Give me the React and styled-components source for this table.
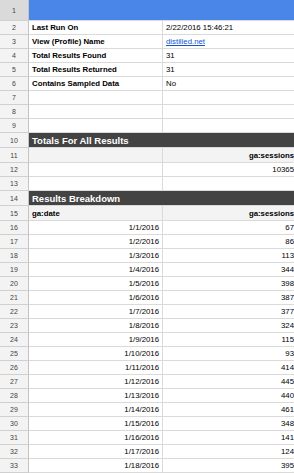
import styled, { createGlobalStyle } from "styled-components";

const GlobalStyle = createGlobalStyle`
  html, body {
    margin: 0;
    padding: 0;
    overflow: hidden;
    background: #ffffff;
  }
  body {
    font-family: "Liberation Sans", Arial, sans-serif;
  }
`;

const info = [
  { label: "Last Run On", value: "2/22/2016 15:46:21" },
  { label: "View (Profile) Name", value: "distilled.net", link: true },
  { label: "Total Results Found", value: "31" },
  { label: "Total Results Returned", value: "31" },
  { label: "Contains Sampled Data", value: "No" },
];

const breakdown = [
  ["1/1/2016", 67],
  ["1/2/2016", 86],
  ["1/3/2016", 113],
  ["1/4/2016", 344],
  ["1/5/2016", 398],
  ["1/6/2016", 387],
  ["1/7/2016", 377],
  ["1/8/2016", 324],
  ["1/9/2016", 115],
  ["1/10/2016", 93],
  ["1/11/2016", 414],
  ["1/12/2016", 445],
  ["1/13/2016", 440],
  ["1/14/2016", 461],
  ["1/15/2016", 348],
  ["1/16/2016", 141],
  ["1/17/2016", 124],
  ["1/18/2016", 395],
];

export default function App() {
  return (
    <>
      <GlobalStyle />
      <Sheet>
        <Row $height={21}>
          <RowNum $selected>1</RowNum>
          <Banner />
        </Row>

        {info.map((item, i) => (
          <Row key={item.label}>
            <RowNum>{i + 2}</RowNum>
            <CellA $bold>{item.label}</CellA>
            <CellB>{item.link ? <Link>{item.value}</Link> : item.value}</CellB>
          </Row>
        ))}

        {[7, 8, 9].map((n) => (
          <Row key={n}>
            <RowNum>{n}</RowNum>
            <CellA />
            <CellB />
          </Row>
        ))}

        <Row $height={15}>
          <RowNum>10</RowNum>
          <Section>Totals For All Results</Section>
        </Row>
        <Row $height={15}>
          <RowNum>11</RowNum>
          <CellA $shade />
          <CellB $shade $bold $right>ga:sessions</CellB>
        </Row>
        <Row>
          <RowNum>12</RowNum>
          <CellA />
          <CellB $right>10365</CellB>
        </Row>
        <Row>
          <RowNum>13</RowNum>
          <CellA />
          <CellB />
        </Row>

        <Row $height={15}>
          <RowNum>14</RowNum>
          <Section>Results Breakdown</Section>
        </Row>
        <Row $height={15}>
          <RowNum>15</RowNum>
          <CellA $shade $bold>ga:date</CellA>
          <CellB $shade $bold $right>ga:sessions</CellB>
        </Row>

        {breakdown.map(([date, sessions], i) => (
          <Row key={date}>
            <RowNum>{i + 16}</RowNum>
            <CellA $right>{date}</CellA>
            <CellB $right>{sessions}</CellB>
          </Row>
        ))}
      </Sheet>
    </>
  );
}

const Sheet = styled.div`
  display: flex;
  flex-direction: column;
  width: 294px;
  overflow: hidden;
`;

const Row = styled.div`
  display: flex;
  flex: none;
  height: ${(props) => props.$height || 14}px;
  box-sizing: border-box;
  border-bottom: 1px solid #dadada;
`;

const RowNum = styled.div`
  flex: none;
  width: 29px;
  box-sizing: border-box;
  border-right: 1px solid #c4c4c4;
  background: ${(props) => (props.$selected ? "#dadada" : "#f3f3f3")};
  color: #444;
  font-size: 7px;
  display: flex;
  align-items: center;
  justify-content: center;
  margin-bottom: -1px;
  border-bottom: 1px solid #d0d0d0;
`;

const Cell = styled.div`
  box-sizing: border-box;
  display: flex;
  align-items: center;
  justify-content: ${(props) => (props.$right ? "flex-end" : "flex-start")};
  padding: 0 3px;
  font-size: 7.8px;
  font-weight: ${(props) => (props.$bold ? 700 : 400)};
  color: #000;
  background: ${(props) => (props.$shade ? "#f3f3f3" : "#fff")};
  white-space: nowrap;
  overflow: hidden;
`;

const CellA = styled(Cell)`
  flex: none;
  width: 134px;
  border-right: 1px solid #dadada;
`;

const CellB = styled(Cell)`
  flex: none;
  width: 134px;
`;

const Banner = styled.div`
  flex: 1;
  background: #4a86e8;
`;

const Section = styled(Cell)`
  flex: 1;
  background: #434343;
  color: #fff;
  font-weight: 700;
  font-size: 9.5px;
`;

const Link = styled.span`
  color: #1155cc;
  text-decoration: underline;
`;
